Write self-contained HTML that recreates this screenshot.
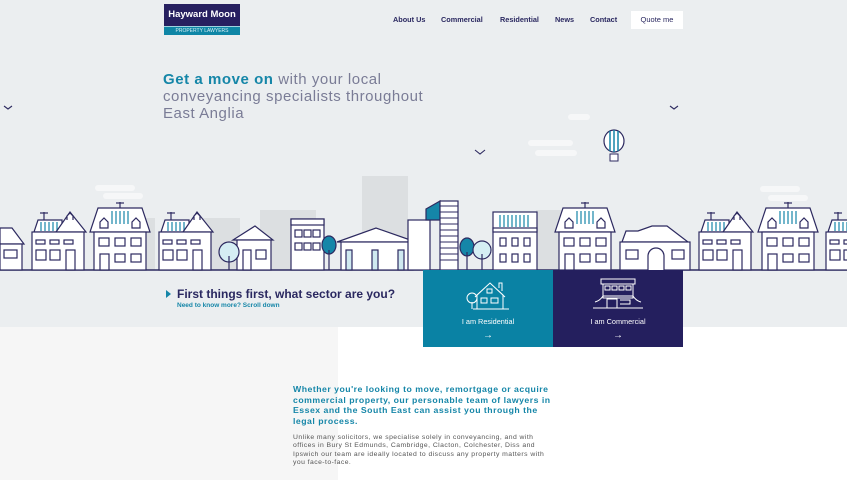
<!DOCTYPE html>
<html><head><meta charset="utf-8"><style>
*{margin:0;padding:0;box-sizing:border-box}
body{width:847px;height:480px;overflow:hidden;background:#fff;font-family:"Liberation Sans",sans-serif;position:relative}
.top{position:absolute;left:0;top:0;width:847px;height:327px;background:#ebeef0}
.lp{position:absolute;left:0;top:327px;width:338px;height:153px;background:#f6f6f6}
.logo{position:absolute;left:164px;top:4px;width:76px;height:32px}
.logo .a{height:22px;background:#272060;color:#fff;font-weight:bold;font-size:9.5px;line-height:22px;text-align:center}
.logo .b{height:9px;background:#0f86a6;border-top:1px solid #9fd3e0;color:#d6eef4;font-size:5px;line-height:8px;text-align:center}
nav{position:absolute;top:11px;left:393px;font-size:7.3px;color:#2a2860;font-weight:bold}
nav span{position:absolute;top:4px;white-space:nowrap}
.q{position:absolute;left:631px;top:11px;width:52px;height:18px;background:#fff;font-size:7.5px;line-height:18px;text-align:center;color:#2a2860}
h1{position:absolute;left:163px;top:71px;font-size:15px;font-weight:normal;color:#7a7c96;line-height:17px;white-space:nowrap;letter-spacing:0.55px}
h1 b{color:#1586a8}
.ft{position:absolute;left:177px;top:287px;font-size:12px;font-weight:bold;color:#2a2860}
.tri{position:absolute;left:166px;top:290px;width:0;height:0;border-left:5px solid #1586a8;border-top:4px solid transparent;border-bottom:4px solid transparent}
.sd{position:absolute;left:177px;top:302px;font-size:6.5px;font-weight:bold;color:#1586a8}
.card{position:absolute;top:270px;width:130px;height:77px;color:#fff;font-size:7.3px;text-align:center}
.card .t{position:absolute;top:47px;width:100%}
.card .ar{position:absolute;top:60px;width:100%;font-size:10px}
.p1{position:absolute;left:293px;top:384px;font-size:8.7px;font-weight:bold;color:#1586a8;line-height:10.6px;white-space:nowrap;letter-spacing:0.5px}
.p2{position:absolute;left:293px;top:434px;font-size:6.8px;color:#555;line-height:8.4px;white-space:nowrap;letter-spacing:0.45px}
</style></head><body>
<div class="top"></div><div class="lp"></div>
<svg style="position:absolute;left:0;top:0" width="847" height="280" viewBox="0 0 847 280">
<defs>
<g id="A" stroke="#2d2a60" stroke-width="1.2" fill="#fff">
<polygon points="8,0 52,0 60,24 0,24"/>
<g stroke="#1586a8"><line x1="22" y1="3" x2="22" y2="16"/><line x1="26" y1="3" x2="26" y2="16"/><line x1="30" y1="3" x2="30" y2="16"/><line x1="34" y1="3" x2="34" y2="16"/><line x1="38" y1="3" x2="38" y2="16"/></g>
<path d="M10 20v-6l4-4 4 4v6zM42 20v-6l4-4 4 4v6z"/>
<rect x="4" y="24" width="52" height="38"/>
<rect x="9" y="30" width="10" height="8"/><rect x="25" y="30" width="10" height="8"/><rect x="41" y="30" width="10" height="8"/>
<rect x="10" y="46" width="9" height="16"/><rect x="25" y="46" width="10" height="8"/><rect x="41" y="46" width="10" height="8"/>
<line x1="30" y1="-6" x2="30" y2="0"/><line x1="26" y1="-5" x2="34" y2="-5"/>
</g>
<g id="B" stroke="#2d2a60" stroke-width="1.2" fill="#fff">
<polygon points="6,14 10,2 34,2 34,14"/>
<g stroke="#1586a8"><line x1="13" y1="4" x2="13" y2="13"/><line x1="17" y1="4" x2="17" y2="13"/><line x1="21" y1="4" x2="21" y2="13"/><line x1="25" y1="4" x2="25" y2="13"/><line x1="29" y1="4" x2="29" y2="13"/></g>
<polygon points="28,14 42,-6 58,14"/>
<rect x="4" y="14" width="52" height="38"/>
<rect x="8" y="22" width="9" height="4"/><rect x="22" y="22" width="9" height="4"/><rect x="36" y="22" width="9" height="4"/>
<rect x="8" y="32" width="10" height="10"/><rect x="22" y="32" width="10" height="10"/><rect x="38" y="32" width="9" height="20"/>
<path d="M39 2v-4l3-3 3 3v4"/>
<line x1="16" y1="-6" x2="16" y2="2"/><line x1="12" y1="-5" x2="20" y2="-5"/>
</g>
</defs>
<g fill="#dcdfe1">
<rect x="362" y="176" width="46" height="94"/><rect x="260" y="210" width="56" height="60"/><rect x="200" y="218" width="40" height="52"/><rect x="536" y="210" width="30" height="60"/><rect x="115" y="218" width="40" height="52"/>
</g>
<g fill="#f6f7f8"><rect x="95" y="185" width="40" height="6" rx="3"/><rect x="103" y="193" width="40" height="6" rx="3"/><rect x="528" y="140" width="45" height="6" rx="3"/><rect x="535" y="150" width="42" height="6" rx="3"/><rect x="760" y="186" width="40" height="6" rx="3"/><rect x="768" y="195" width="40" height="6" rx="3"/><rect x="568" y="114" width="22" height="6" rx="3"/></g>
<path d="M475 150l5 4 5-4M4 106l4 3 4-3M670 106l4 3 4-3" stroke="#2d2a60" stroke-width="1.1" fill="none"/>
<ellipse cx="614" cy="141" rx="10" ry="11" fill="#fff" stroke="#2d2a60" stroke-width="1.2"/>
<path d="M610 131v20M614 130v22M618 131v20" stroke="#1586a8" stroke-width="1.5"/>
<rect x="610" y="154" width="8" height="7" fill="#fff" stroke="#2d2a60"/>
<line x1="0" y1="270" x2="847" y2="270" stroke="#2d2a60" stroke-width="1.5"/>
<g stroke="#2d2a60" stroke-width="1.2" fill="#fff">
<polygon points="0,228 12,228 24,244 0,244"/><rect x="0" y="244" width="22" height="26"/><rect x="4" y="250" width="13" height="8"/>
<use href="#B" x="28" y="218"/><use href="#A" x="90" y="208"/><use href="#B" x="155" y="218"/>
<polygon points="233,240 255,226 273,240"/><rect x="237" y="240" width="34" height="30"/><rect x="243" y="250" width="8" height="20"/><rect x="256" y="250" width="10" height="9"/>
<circle cx="229" cy="252" r="10" fill="#d5eef4"/><line x1="229" y1="256" x2="229" y2="270"/>
<rect x="291" y="219" width="33" height="51"/><rect x="291" y="219" width="33" height="6"/><rect x="295" y="230" width="7" height="7"/><rect x="304" y="230" width="7" height="7"/><rect x="313" y="230" width="7" height="7"/><rect x="295" y="243" width="7" height="7"/><rect x="304" y="243" width="7" height="7"/><rect x="313" y="243" width="7" height="7"/>
<ellipse cx="329" cy="245" rx="7" ry="9" fill="#1586a8"/><line x1="329" y1="250" x2="329" y2="270"/>
<polygon points="337,242 376,228 416,242"/><rect x="341" y="242" width="72" height="28"/><rect x="346" y="250" width="6" height="20" fill="#cfe9f0"/><rect x="372" y="250" width="6" height="20" fill="#cfe9f0"/><rect x="398" y="250" width="6" height="20" fill="#cfe9f0"/>
<rect x="408" y="220" width="22" height="50"/><polygon points="426,209 440,201 440,220 426,220" fill="#1586a8"/><rect x="440" y="201" width="18" height="69"/>
<g stroke-width="1"><path d="M440 206h18M440 212h18M440 218h18M440 224h18M440 230h18M440 236h18M440 242h18M440 248h18M440 254h18M440 260h18"/></g>
<ellipse cx="467" cy="247" rx="7" ry="9" fill="#1586a8"/><circle cx="482" cy="250" r="9" fill="#d5eef4"/><line x1="467" y1="252" x2="467" y2="270"/><line x1="482" y1="254" x2="482" y2="270"/>
<rect x="493" y="212" width="44" height="58"/><rect x="493" y="228" width="44" height="4"/><g stroke="#1586a8"><path d="M500 215v12M504 215v12M508 215v12M512 215v12M516 215v12M520 215v12M524 215v12M528 215v12"/></g>
<rect x="500" y="238" width="6" height="8"/><rect x="512" y="238" width="6" height="8"/><rect x="524" y="238" width="6" height="8"/><rect x="500" y="254" width="6" height="8"/><rect x="512" y="254" width="6" height="8"/><rect x="524" y="254" width="6" height="8"/>
<use href="#A" x="555" y="208"/>
<polygon points="622,242 626,231 638,231 652,226 667,226 688,242"/><rect x="620" y="242" width="70" height="28"/><path d="M648 270v-14a8 8 0 0 1 16 0v14"/><rect x="626" y="250" width="12" height="9"/><rect x="672" y="250" width="12" height="9"/>
<use href="#B" x="695" y="218"/><use href="#A" x="758" y="208"/><use href="#B" x="822" y="218"/>
</g>
</svg>
<div class="logo"><div class="a">Hayward Moon</div><div class="b">PROPERTY LAWYERS</div></div>
<nav><span style="left:0">About Us</span><span style="left:48px">Commercial</span><span style="left:107px">Residential</span><span style="left:162px">News</span><span style="left:197px">Contact</span></nav>
<div class="q">Quote me</div>
<h1><b>Get a move on</b> with your local<br>conveyancing specialists throughout<br>East Anglia</h1>
<div class="tri"></div>
<div class="ft">First things first, what sector are you?</div>
<div class="sd">Need to know more? Scroll down</div>
<div class="card" style="left:423px;background:#0a82a4">
<svg style="position:absolute;left:40px;top:8px" width="50" height="34" viewBox="0 0 50 34" fill="none" stroke="#fff" stroke-width="1"><path d="M10 31h36M14 31V17l13-12 13 12v14M12 19l15-14 15 14M36 10V5h3v8"/><circle cx="9" cy="20" r="5"/><path d="M9 24v7"/><rect x="18" y="20" width="6" height="5"/><rect x="28" y="20" width="7" height="5"/><rect x="24" y="11" width="5" height="4"/></svg>
<div class="t">I am Residential</div><div class="ar">→</div></div>
<div class="card" style="left:553px;background:#241f5e">
<svg style="position:absolute;left:38px;top:7px" width="54" height="34" viewBox="0 0 54 34" fill="none" stroke="#fff" stroke-width="1"><rect x="10" y="2" width="34" height="5"/><path d="M12 7v14h30V7"/><rect x="14" y="9" width="5" height="4"/><rect x="21" y="9" width="5" height="4"/><rect x="28" y="9" width="5" height="4"/><rect x="35" y="9" width="5" height="4"/><path d="M4 25c4-1 6-3 8-6h30c2 3 4 5 8 6M2 31h50M16 31v-9h10v9M29 23h10v4H29"/></svg>
<div class="t">I am Commercial</div><div class="ar">→</div></div>
<div class="p1">Whether you're looking to move, remortgage or acquire<br>commercial property, our personable team of lawyers in<br>Essex and the South East can assist you through the<br>legal process.</div>
<div class="p2">Unlike many solicitors, we specialise solely in conveyancing, and with<br>offices in Bury St Edmunds, Cambridge, Clacton, Colchester, Diss and<br>Ipswich our team are ideally located to discuss any property matters with<br>you face-to-face.</div>
</body></html>
